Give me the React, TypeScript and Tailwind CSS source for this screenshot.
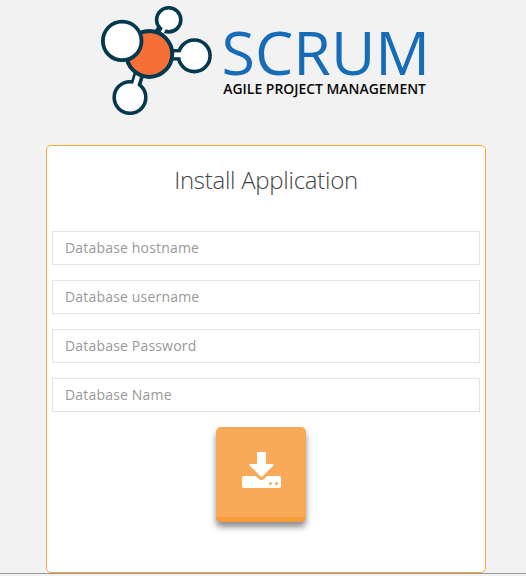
function Logo() {
  return (
    <svg className="block h-[120px] w-[330px]" viewBox="100 0 330 120" role="img" aria-label="Scrum">
      <g fill="#fff" stroke="#04384f">
        <path d="M158 34L165 24" strokeWidth="9.5" />
        <path d="M170 54.8H181" strokeWidth="11.5" />
        <path d="M139.5 72L136 84" strokeWidth="11" />
        <g strokeWidth="3.6">
          <circle cx="168.7" cy="19.8" r="12.1" />
          <circle cx="194.3" cy="55.8" r="15.8" />
          <circle cx="130" cy="97.5" r="15.8" />
        </g>
        <path d="M161.5 34L165.3 26.5" stroke="#fff" strokeWidth="3.2" />
        <path d="M172 54.8H183" stroke="#fff" strokeWidth="4.8" />
        <path d="M138.8 73L134.8 86" stroke="#fff" strokeWidth="4.6" />
        <circle cx="149.3" cy="54" r="22.9" fill="#f56f36" strokeWidth="4" />
        <circle cx="122.2" cy="40.9" r="19.3" strokeWidth="3.8" />
      </g>
      <text x="221.6" y="74.8" textLength="208.5" lengthAdjust="spacingAndGlyphs" fontSize="59.5" fill="#176cb8" className="font-['Open_Sans',sans-serif]">SCRUM</text>
      <text x="223.3" y="93.8" textLength="202.7" lengthAdjust="spacingAndGlyphs" fontSize="14" fontWeight="600" fill="#080808" className="font-['Open_Sans',sans-serif]">AGILE PROJECT MANAGEMENT</text>
    </svg>
  );
}

function DownloadIcon() {
  return (
    <svg className="h-[36px] w-[39px]" viewBox="0 0 39 36" fill="#fff">
      <path d="M15 0H24V12H31.2Q32.2 12.5 31.4 13.4L20.4 24.5Q19.5 25.3 18.6 24.5L7.6 13.4Q6.8 12.5 7.8 12H15Z" />
      <path fillRule="evenodd" d="M2 24H13.8L16.5 26.8Q19.5 29.2 22.5 26.8L25.2 24H37Q39 24 39 26V34Q39 36 37 36H2Q0 36 0 34V26Q0 24 2 24ZM28.5 30A1.5 1.5 0 1 0 28.5 33A1.5 1.5 0 1 0 28.5 30ZM34.5 30A1.5 1.5 0 1 0 34.5 33A1.5 1.5 0 1 0 34.5 30Z" />
    </svg>
  );
}

const fields = ["Database hostname", "Database username", "Database Password", "Database Name"];

export default function App() {
  return (
    <div className="h-[576px] overflow-hidden bg-[#f2f2f2] font-['Open_Sans',sans-serif]">
      <div className="flex h-[574px] flex-col border-b border-[#999]">
        <header className="h-[145px] pl-[100px]"><Logo /></header>
        <main className="ml-[46px] flex h-[428px] w-[440px] flex-col items-center rounded-[5px] border border-[#f6a93b] bg-white px-[5px]">
          <h1 className="mt-[17px] h-[68px] text-2xl leading-[34px] font-light tracking-[-0.27px] text-[#444]">Install Application</h1>
          <form className="flex w-full flex-col items-center gap-[15px]">
            {fields.map((label) => (
              <input
                key={label}
                aria-label={label}
                placeholder={label}
                type={label === "Database Password" ? "password" : "text"}
                className="h-[34px] w-full border border-[#e5e5e5] bg-white px-3 pb-[2px] text-sm tracking-[0.18px] text-[#555] placeholder:text-[#999]"
              />
            ))}
            <button type="button" aria-label="Install" className="mr-[10px] flex h-[95px] w-[90px] items-center justify-center rounded-[5px] border-b-[5px] border-[#f89d3c] bg-[#f8aa59] pb-1 shadow-[0_5px_6px_rgba(0,0,0,0.45)]">
              <DownloadIcon />
            </button>
          </form>
        </main>
      </div>
    </div>
  );
}
